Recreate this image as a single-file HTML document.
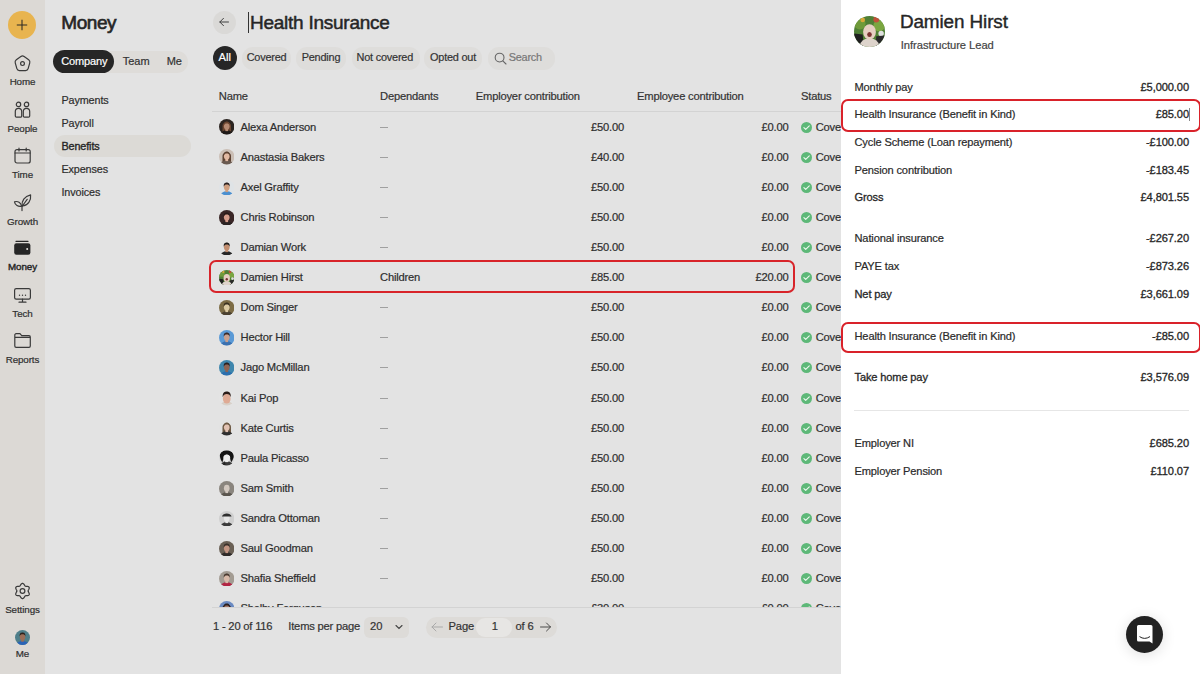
<!DOCTYPE html>
<html><head><meta charset="utf-8"><style>
html,body{margin:0;padding:0;width:1200px;height:674px;overflow:hidden;position:relative;font-family:"Liberation Sans", sans-serif;}
.t{position:absolute;line-height:1;white-space:nowrap;-webkit-text-stroke:0.2px currentColor;}
</style></head><body>
<div style="position:absolute;left:0px;top:0px;width:45px;height:674px;background:#dcd9d5;"></div>
<div style="position:absolute;left:45px;top:0px;width:796px;height:674px;background:#e3e3e3;"></div>
<div style="position:absolute;left:841px;top:0px;width:359px;height:674px;background:#ffffff;"></div>
<div style="position:absolute;left:8px;top:11px;width:28px;height:28px;background:#e8b44f;border-radius:50%;"></div>
<svg style="position:absolute;left:14px;top:17px" width="16" height="16" viewBox="0 0 16 16"><path d="M8 2.8V13.2M2.8 8H13.2" stroke="#2d2a25" stroke-width="1.05" fill="none"/></svg>
<svg style="position:absolute;left:13px;top:54px" width="19" height="18" viewBox="0 0 19 18"><path d="M11.11 2.48 L15.69 5.82 Q17.30 7.00 16.76 8.93 L15.14 14.67 Q14.60 16.60 12.60 16.60 L6.40 16.60 Q4.40 16.60 3.86 14.67 L2.24 8.93 Q1.70 7.00 3.31 5.82 L7.89 2.48 Q9.50 1.30 11.11 2.48 Z" stroke="#3a3a3a" stroke-width="1.2" fill="none" stroke-linejoin="round" stroke-linecap="round"/><circle cx="9.5" cy="9.6" r="1.9" stroke="#3a3a3a" stroke-width="1.2" fill="none" stroke-linejoin="round" stroke-linecap="round"/></svg>
<svg style="position:absolute;left:13px;top:101px" width="19" height="18" viewBox="0 0 19 18"><circle cx="5.5" cy="3.4" r="2.2" stroke="#3a3a3a" stroke-width="1.2" fill="none" stroke-linejoin="round" stroke-linecap="round"/><circle cx="13.5" cy="3.4" r="2.2" stroke="#3a3a3a" stroke-width="1.2" fill="none" stroke-linejoin="round" stroke-linecap="round"/><path d="M2.3 15 V10.6 a3.2 3.2 0 0 1 6.4 0 V15 a1.2 1.2 0 0 1 -1.2 1.2 H3.5 a1.2 1.2 0 0 1 -1.2 -1.2 Z" stroke="#3a3a3a" stroke-width="1.2" fill="none" stroke-linejoin="round" stroke-linecap="round"/><path d="M10.3 15 V10.6 a3.2 3.2 0 0 1 6.4 0 V15 a1.2 1.2 0 0 1 -1.2 1.2 H11.5 a1.2 1.2 0 0 1 -1.2 -1.2 Z" stroke="#3a3a3a" stroke-width="1.2" fill="none" stroke-linejoin="round" stroke-linecap="round"/></svg>
<svg style="position:absolute;left:13px;top:147px" width="19" height="18" viewBox="0 0 19 18"><rect x="2" y="2.6" width="15.2" height="13.4" rx="2" stroke="#3a3a3a" stroke-width="1.2" fill="none" stroke-linejoin="round" stroke-linecap="round"/><path d="M2 6 H17.2 M6 1.2 V4 M13.2 1.2 V4" stroke="#3a3a3a" stroke-width="1.2" fill="none" stroke-linejoin="round" stroke-linecap="round"/></svg>
<svg style="position:absolute;left:13px;top:193px" width="19" height="19" viewBox="0 0 19 19"><path d="M9.3 13 C8.2 8 11.5 3.2 17.6 1.8 C18.3 7.5 15 12.4 9.3 13 Z" stroke="#3a3a3a" stroke-width="1.2" fill="none" stroke-linejoin="round" stroke-linecap="round"/><path d="M9.3 13 L14.2 6.3" stroke="#3a3a3a" stroke-width="1.2" fill="none" stroke-linejoin="round" stroke-linecap="round"/><path d="M8.6 13.2 C5.2 14 2 12 1.5 8.8 C4.8 7.8 8 9.5 8.6 13.2 Z" stroke="#3a3a3a" stroke-width="1.2" fill="none" stroke-linejoin="round" stroke-linecap="round"/><path d="M9 13 V17.6" stroke="#3a3a3a" stroke-width="1.2" fill="none" stroke-linejoin="round" stroke-linecap="round"/></svg>
<svg style="position:absolute;left:13px;top:240px" width="19" height="16" viewBox="0 0 19 16"><rect x="1.2" y="3.2" width="16.2" height="11.6" rx="2.2" fill="#262626"/><path d="M3 1.3 H15" stroke="#262626" stroke-width="1.3" stroke-linecap="round"/><circle cx="14.2" cy="9" r="1" fill="#e6e3df"/></svg>
<svg style="position:absolute;left:13px;top:287px" width="19" height="17" viewBox="0 0 19 17"><rect x="1.6" y="1.6" width="15.8" height="10.6" rx="1.6" stroke="#3a3a3a" stroke-width="1.2" fill="none" stroke-linejoin="round" stroke-linecap="round"/><path d="M9.5 12.2 V15 M6 15.2 H13" stroke="#3a3a3a" stroke-width="1.2" fill="none" stroke-linejoin="round" stroke-linecap="round"/><circle cx="6.5" cy="8.3" r="0.7" fill="#3a3a3a"/><circle cx="9.5" cy="8.3" r="0.7" fill="#3a3a3a"/><circle cx="12.5" cy="8.3" r="0.7" fill="#3a3a3a"/></svg>
<svg style="position:absolute;left:13px;top:332px" width="19" height="17" viewBox="0 0 19 17"><path d="M1.8 3 a1.3 1.3 0 0 1 1.3 -1.3 H7 L8.7 3.6 H16 a1.3 1.3 0 0 1 1.3 1.3 V14 a1.3 1.3 0 0 1 -1.3 1.3 H3.1 a1.3 1.3 0 0 1 -1.3 -1.3 Z M1.8 5.3 H17.3" stroke="#3a3a3a" stroke-width="1.2" fill="none" stroke-linejoin="round" stroke-linecap="round"/></svg>
<svg style="position:absolute;left:13px;top:582px" width="19" height="18" viewBox="0 0 19 18"><path d="M9.50 1.40 L9.90 1.46 L10.27 1.63 L10.62 1.90 L10.94 2.24 L11.21 2.62 L11.44 3.02 L11.65 3.39 L11.86 3.71 L12.06 3.97 L12.30 4.15 L12.58 4.26 L12.90 4.31 L13.28 4.33 L13.71 4.32 L14.17 4.33 L14.63 4.38 L15.09 4.48 L15.49 4.65 L15.83 4.89 L16.08 5.20 L16.23 5.57 L16.27 5.99 L16.21 6.42 L16.07 6.86 L15.88 7.29 L15.65 7.69 L15.44 8.06 L15.26 8.39 L15.14 8.70 L15.10 9.00 L15.14 9.30 L15.26 9.61 L15.44 9.94 L15.65 10.31 L15.88 10.71 L16.07 11.14 L16.21 11.58 L16.27 12.01 L16.23 12.43 L16.08 12.80 L15.83 13.11 L15.49 13.35 L15.09 13.52 L14.63 13.62 L14.17 13.67 L13.71 13.68 L13.28 13.67 L12.90 13.69 L12.58 13.74 L12.30 13.85 L12.06 14.03 L11.86 14.29 L11.65 14.61 L11.44 14.98 L11.21 15.38 L10.94 15.76 L10.62 16.10 L10.27 16.37 L9.90 16.54 L9.50 16.60 L9.10 16.54 L8.73 16.37 L8.38 16.10 L8.06 15.76 L7.79 15.38 L7.56 14.98 L7.35 14.61 L7.14 14.29 L6.94 14.03 L6.70 13.85 L6.42 13.74 L6.10 13.69 L5.72 13.67 L5.29 13.68 L4.83 13.67 L4.37 13.62 L3.91 13.52 L3.51 13.35 L3.17 13.11 L2.92 12.80 L2.77 12.43 L2.73 12.01 L2.79 11.58 L2.93 11.14 L3.12 10.71 L3.35 10.31 L3.56 9.94 L3.74 9.61 L3.86 9.30 L3.90 9.00 L3.86 8.70 L3.74 8.39 L3.56 8.06 L3.35 7.69 L3.12 7.29 L2.93 6.86 L2.79 6.42 L2.73 5.99 L2.77 5.57 L2.92 5.20 L3.17 4.89 L3.51 4.65 L3.91 4.48 L4.37 4.38 L4.83 4.33 L5.29 4.32 L5.72 4.33 L6.10 4.31 L6.42 4.26 L6.70 4.15 L6.94 3.97 L7.14 3.71 L7.35 3.39 L7.56 3.02 L7.79 2.62 L8.06 2.24 L8.38 1.90 L8.73 1.63 L9.10 1.46 L9.50 1.40 Z" stroke="#3a3a3a" stroke-width="1.2" fill="none" stroke-linejoin="round" stroke-linecap="round"/><circle cx="9.5" cy="9" r="2.4" stroke="#3a3a3a" stroke-width="1.2" fill="none" stroke-linejoin="round" stroke-linecap="round"/></svg>
<div style="position:absolute;left:15px;top:630.2px;width:15px;height:15px"><svg width="15" height="15" viewBox="0 0 16 16" style="display:block"><defs><clipPath id="c1"><circle cx="8" cy="8" r="8"/></clipPath></defs><g clip-path="url(#c1)"><rect width="16" height="16" fill="#4f7f8a"/><ellipse cx="8" cy="16.5" rx="6.8" ry="4.8" fill="#2a64b8"/><rect x="6.6" y="9.5" width="2.8" height="3" fill="#9a6e58"/><ellipse cx="8" cy="7.4" rx="2.9" ry="3.5" fill="#9a6e58"/><path d="M4.9 7 C4.6 3.2 6.5 2.6 8 2.6 C9.5 2.6 11.4 3.2 11.1 7 C10.5 5 9.5 4.6 8 4.6 C6.5 4.6 5.5 5 4.9 7 Z" fill="#2e221c"/></g></svg></div>
<div class="t" style="left:0;width:45px;text-align:center;top:77.40px;font-size:9.8px;letter-spacing:-0.1px;color:#2f2f2f;">Home</div>
<div class="t" style="left:0;width:45px;text-align:center;top:123.70px;font-size:9.8px;letter-spacing:-0.1px;color:#2f2f2f;">People</div>
<div class="t" style="left:0;width:45px;text-align:center;top:170.40px;font-size:9.8px;letter-spacing:-0.1px;color:#2f2f2f;">Time</div>
<div class="t" style="left:0;width:45px;text-align:center;top:216.90px;font-size:9.8px;letter-spacing:-0.1px;color:#2f2f2f;">Growth</div>
<div class="t" style="left:0;width:45px;text-align:center;top:262.20px;font-size:9.8px;letter-spacing:-0.1px;color:#262626;-webkit-text-stroke:0.4px #262626">Money</div>
<div class="t" style="left:0;width:45px;text-align:center;top:308.80px;font-size:9.8px;letter-spacing:-0.1px;color:#2f2f2f;">Tech</div>
<div class="t" style="left:0;width:45px;text-align:center;top:354.50px;font-size:9.8px;letter-spacing:-0.1px;color:#2f2f2f;">Reports</div>
<div class="t" style="left:0;width:45px;text-align:center;top:604.70px;font-size:9.8px;letter-spacing:-0.1px;color:#2f2f2f;">Settings</div>
<div class="t" style="left:0;width:45px;text-align:center;top:648.80px;font-size:9.8px;letter-spacing:-0.1px;color:#2f2f2f;">Me</div>
<div class="t " style="left:61.30px;top:12.62px;font-size:19px;color:#262626;font-weight:normal;letter-spacing:-0.45px;-webkit-text-stroke:0.65px #262626;">Money</div>
<div style="position:absolute;left:53px;top:50.5px;width:135px;height:22px;background:#dedcd9;border-radius:11px;"></div>
<div style="position:absolute;left:53px;top:49.6px;width:61px;height:23.7px;background:#262626;border-radius:12px;"></div>
<div class="t " style="left:61.30px;top:55.99px;font-size:11px;color:#ffffff;font-weight:normal;letter-spacing:-0.15px;">Company</div>
<div class="t " style="left:122.70px;top:55.99px;font-size:11px;color:#333;font-weight:normal;">Team</div>
<div class="t " style="left:166.70px;top:55.99px;font-size:11px;color:#333;font-weight:normal;">Me</div>
<div style="position:absolute;left:54px;top:135.4px;width:137px;height:21.6px;background:#dcdad6;border-radius:11px;"></div>
<div class="t " style="left:61.40px;top:94.56px;font-size:10.8px;color:#2e2e2e;font-weight:normal;letter-spacing:-0.1px;">Payments</div>
<div class="t " style="left:61.40px;top:117.66px;font-size:10.8px;color:#2e2e2e;font-weight:normal;letter-spacing:-0.1px;">Payroll</div>
<div class="t " style="left:61.40px;top:140.86px;font-size:10.8px;color:#262626;font-weight:normal;letter-spacing:-0.1px;-webkit-text-stroke:0.35px #262626;">Benefits</div>
<div class="t " style="left:61.40px;top:163.96px;font-size:10.8px;color:#2e2e2e;font-weight:normal;letter-spacing:-0.1px;">Expenses</div>
<div class="t " style="left:61.40px;top:187.06px;font-size:10.8px;color:#2e2e2e;font-weight:normal;letter-spacing:-0.1px;">Invoices</div>
<div style="position:absolute;left:212.5px;top:10.5px;width:23px;height:23px;background:#dad9d7;border-radius:50%;"></div>
<svg style="position:absolute;left:217px;top:15px" width="14" height="14" viewBox="0 0 14 14"><path d="M11.5 7 H2.8 M6.5 3.3 L2.8 7 L6.5 10.7" stroke="#3a3a3a" stroke-width="0.95" fill="none" stroke-linecap="round" stroke-linejoin="round"/></svg>
<div style="position:absolute;left:248px;top:12px;width:1px;height:21px;background:#333;"></div>
<div class="t " style="left:250.00px;top:12.62px;font-size:19px;color:#262626;font-weight:normal;-webkit-text-stroke:0.5px #262626;letter-spacing:-0.25px;">Health Insurance</div>
<div style="position:absolute;left:212.5px;top:46px;width:24.5px;height:23.5px;background:#262626;border-radius:12px;"></div>
<div class="t " style="left:224.75px;top:52.42px;font-size:11.2px;color:#fff;font-weight:normal;transform:translateX(-50%);">All</div>
<div style="position:absolute;left:241.7px;top:47px;width:49.1px;height:22.5px;background:#dedddb;border-radius:11px;"></div>
<div class="t " style="left:246.70px;top:52.47px;font-size:10.9px;color:#333;font-weight:normal;letter-spacing:-0.2px;">Covered</div>
<div style="position:absolute;left:295.8px;top:47px;width:50.0px;height:22.5px;background:#dedddb;border-radius:11px;"></div>
<div class="t " style="left:301.70px;top:52.47px;font-size:10.9px;color:#333;font-weight:normal;letter-spacing:-0.2px;">Pending</div>
<div style="position:absolute;left:352px;top:47px;width:67.8px;height:22.5px;background:#dedddb;border-radius:11px;"></div>
<div class="t " style="left:356.50px;top:52.47px;font-size:10.9px;color:#333;font-weight:normal;letter-spacing:-0.2px;">Not covered</div>
<div style="position:absolute;left:424.4px;top:47px;width:57.6px;height:22.5px;background:#dedddb;border-radius:11px;"></div>
<div class="t " style="left:430.00px;top:52.47px;font-size:10.9px;color:#333;font-weight:normal;letter-spacing:-0.2px;">Opted out</div>
<div style="position:absolute;left:487.7px;top:47px;width:67px;height:22.5px;background:#dedddb;border-radius:11px;"></div>
<svg style="position:absolute;left:494px;top:52px" width="13" height="13" viewBox="0 0 13 13"><circle cx="5.6" cy="5.6" r="4.4" stroke="#666" stroke-width="1.1" fill="none"/><path d="M8.8 8.8 L12 12" stroke="#666" stroke-width="1.1" stroke-linecap="round"/></svg>
<div class="t " style="left:508.80px;top:52.47px;font-size:10.9px;color:#777;font-weight:normal;letter-spacing:-0.25px;">Search</div>
<div class="t " style="left:218.75px;top:90.52px;font-size:11.2px;color:#333;font-weight:normal;letter-spacing:-0.2px;">Name</div>
<div class="t " style="left:380.00px;top:90.52px;font-size:11.2px;color:#333;font-weight:normal;letter-spacing:-0.2px;">Dependants</div>
<div class="t " style="left:475.75px;top:90.52px;font-size:11.2px;color:#333;font-weight:normal;letter-spacing:-0.2px;">Employer contribution</div>
<div class="t " style="left:637.00px;top:90.52px;font-size:11.2px;color:#333;font-weight:normal;letter-spacing:-0.2px;">Employee contribution</div>
<div class="t " style="left:801.00px;top:90.52px;font-size:11.2px;color:#333;font-weight:normal;letter-spacing:-0.2px;">Status</div>
<div style="position:absolute;left:212px;top:110.5px;width:629px;height:1px;background:#d3d3d3;"></div>
<div style="position:absolute;left:205px;top:111px;width:636px;height:496px;overflow:hidden">
<div style="position:absolute;left:13.75px;top:8.35px;width:15.5px;height:15.5px;"><svg width="15.5" height="15.5" viewBox="0 0 16 16" style="display:block"><defs><clipPath id="c2"><circle cx="8" cy="8" r="8"/></clipPath></defs><g clip-path="url(#c2)"><rect width="16" height="16" fill="#2b2420"/><path d="M3.6 7 C3.6 2.5 12.4 2.5 12.4 7 V14 H3.6 Z" fill="#6a4530"/><ellipse cx="8" cy="16.5" rx="6.8" ry="4.8" fill="#1f1a18"/><rect x="6.6" y="9.5" width="2.8" height="3" fill="#b58a72"/><ellipse cx="8" cy="7.4" rx="2.9" ry="3.5" fill="#b58a72"/><path d="M4.9 7 C4.6 3.2 6.5 2.6 8 2.6 C9.5 2.6 11.4 3.2 11.1 7 C10.5 5 9.5 4.6 8 4.6 C6.5 4.6 5.5 5 4.9 7 Z" fill="#6a4530"/></g></svg></div>
<div class="t" style="left:35.50px;top:10.62px;font-size:11.2px;color:#2e2e2e;letter-spacing:-0.2px;">Alexa Anderson</div>
<div style="position:absolute;left:175px;top:15.60px;width:7.5px;height:1px;background:#a0a0a0;"></div>
<div class="t" style="right:217.00px;top:10.62px;font-size:11.2px;color:#2e2e2e;letter-spacing:-0.2px;">£50.00</div>
<div class="t" style="right:52.50px;top:10.62px;font-size:11.2px;color:#2e2e2e;letter-spacing:-0.2px;">£0.00</div>
<div style="position:absolute;left:596px;top:10.60px;width:11px;height:11px;border-radius:50%;background:#5db878;"></div>
<svg style="position:absolute;left:596px;top:10.60px" width="11" height="11" viewBox="0 0 11 11"><path d="M2.9 5.6 L4.7 7.4 L8.3 3.8" stroke="#eef8f0" stroke-width="1.1" fill="none" stroke-linecap="round" stroke-linejoin="round"/></svg>
<div class="t" style="left:610.70px;top:10.62px;font-size:11.2px;color:#2e2e2e;letter-spacing:-0.2px;">Covered</div>
<div style="position:absolute;left:13.75px;top:38.45px;width:15.5px;height:15.5px;"><svg width="15.5" height="15.5" viewBox="0 0 16 16" style="display:block"><defs><clipPath id="c3"><circle cx="8" cy="8" r="8"/></clipPath></defs><g clip-path="url(#c3)"><rect width="16" height="16" fill="#cbbfb6"/><path d="M3.6 7 C3.6 2.5 12.4 2.5 12.4 7 V14 H3.6 Z" fill="#5e4232"/><ellipse cx="8" cy="16.5" rx="6.8" ry="4.8" fill="#6a5a50"/><rect x="6.6" y="9.5" width="2.8" height="3" fill="#e2b9a2"/><ellipse cx="8" cy="7.4" rx="2.9" ry="3.5" fill="#e2b9a2"/><path d="M4.9 7 C4.6 3.2 6.5 2.6 8 2.6 C9.5 2.6 11.4 3.2 11.1 7 C10.5 5 9.5 4.6 8 4.6 C6.5 4.6 5.5 5 4.9 7 Z" fill="#5e4232"/></g></svg></div>
<div class="t" style="left:35.50px;top:40.72px;font-size:11.2px;color:#2e2e2e;letter-spacing:-0.2px;">Anastasia Bakers</div>
<div style="position:absolute;left:175px;top:45.70px;width:7.5px;height:1px;background:#a0a0a0;"></div>
<div class="t" style="right:217.00px;top:40.72px;font-size:11.2px;color:#2e2e2e;letter-spacing:-0.2px;">£40.00</div>
<div class="t" style="right:52.50px;top:40.72px;font-size:11.2px;color:#2e2e2e;letter-spacing:-0.2px;">£0.00</div>
<div style="position:absolute;left:596px;top:40.70px;width:11px;height:11px;border-radius:50%;background:#5db878;"></div>
<svg style="position:absolute;left:596px;top:40.70px" width="11" height="11" viewBox="0 0 11 11"><path d="M2.9 5.6 L4.7 7.4 L8.3 3.8" stroke="#eef8f0" stroke-width="1.1" fill="none" stroke-linecap="round" stroke-linejoin="round"/></svg>
<div class="t" style="left:610.70px;top:40.72px;font-size:11.2px;color:#2e2e2e;letter-spacing:-0.2px;">Covered</div>
<div style="position:absolute;left:13.75px;top:68.55px;width:15.5px;height:15.5px;"><svg width="15.5" height="15.5" viewBox="0 0 16 16" style="display:block"><defs><clipPath id="c4"><circle cx="8" cy="8" r="8"/></clipPath></defs><g clip-path="url(#c4)"><rect width="16" height="16" fill="#dfe3e6"/><ellipse cx="8" cy="16.5" rx="6.8" ry="4.8" fill="#4a8fd0"/><rect x="6.6" y="9.5" width="2.8" height="3" fill="#cf9f80"/><ellipse cx="8" cy="7.4" rx="2.9" ry="3.5" fill="#cf9f80"/><path d="M4.9 7 C4.6 3.2 6.5 2.6 8 2.6 C9.5 2.6 11.4 3.2 11.1 7 C10.5 5 9.5 4.6 8 4.6 C6.5 4.6 5.5 5 4.9 7 Z" fill="#2a2020"/></g></svg></div>
<div class="t" style="left:35.50px;top:70.82px;font-size:11.2px;color:#2e2e2e;letter-spacing:-0.2px;">Axel Graffity</div>
<div style="position:absolute;left:175px;top:75.80px;width:7.5px;height:1px;background:#a0a0a0;"></div>
<div class="t" style="right:217.00px;top:70.82px;font-size:11.2px;color:#2e2e2e;letter-spacing:-0.2px;">£50.00</div>
<div class="t" style="right:52.50px;top:70.82px;font-size:11.2px;color:#2e2e2e;letter-spacing:-0.2px;">£0.00</div>
<div style="position:absolute;left:596px;top:70.80px;width:11px;height:11px;border-radius:50%;background:#5db878;"></div>
<svg style="position:absolute;left:596px;top:70.80px" width="11" height="11" viewBox="0 0 11 11"><path d="M2.9 5.6 L4.7 7.4 L8.3 3.8" stroke="#eef8f0" stroke-width="1.1" fill="none" stroke-linecap="round" stroke-linejoin="round"/></svg>
<div class="t" style="left:610.70px;top:70.82px;font-size:11.2px;color:#2e2e2e;letter-spacing:-0.2px;">Covered</div>
<div style="position:absolute;left:13.75px;top:98.65px;width:15.5px;height:15.5px;"><svg width="15.5" height="15.5" viewBox="0 0 16 16" style="display:block"><defs><clipPath id="c5"><circle cx="8" cy="8" r="8"/></clipPath></defs><g clip-path="url(#c5)"><rect width="16" height="16" fill="#3a2626"/><ellipse cx="8" cy="16.5" rx="6.8" ry="4.8" fill="#2a2222"/><rect x="6.6" y="9.5" width="2.8" height="3" fill="#d69c8a"/><ellipse cx="8" cy="7.4" rx="2.9" ry="3.5" fill="#d69c8a"/><path d="M4.9 7 C4.6 3.2 6.5 2.6 8 2.6 C9.5 2.6 11.4 3.2 11.1 7 C10.5 5 9.5 4.6 8 4.6 C6.5 4.6 5.5 5 4.9 7 Z" fill="#2a1a18"/></g></svg></div>
<div class="t" style="left:35.50px;top:100.92px;font-size:11.2px;color:#2e2e2e;letter-spacing:-0.2px;">Chris Robinson</div>
<div style="position:absolute;left:175px;top:105.90px;width:7.5px;height:1px;background:#a0a0a0;"></div>
<div class="t" style="right:217.00px;top:100.92px;font-size:11.2px;color:#2e2e2e;letter-spacing:-0.2px;">£50.00</div>
<div class="t" style="right:52.50px;top:100.92px;font-size:11.2px;color:#2e2e2e;letter-spacing:-0.2px;">£0.00</div>
<div style="position:absolute;left:596px;top:100.90px;width:11px;height:11px;border-radius:50%;background:#5db878;"></div>
<svg style="position:absolute;left:596px;top:100.90px" width="11" height="11" viewBox="0 0 11 11"><path d="M2.9 5.6 L4.7 7.4 L8.3 3.8" stroke="#eef8f0" stroke-width="1.1" fill="none" stroke-linecap="round" stroke-linejoin="round"/></svg>
<div class="t" style="left:610.70px;top:100.92px;font-size:11.2px;color:#2e2e2e;letter-spacing:-0.2px;">Covered</div>
<div style="position:absolute;left:13.75px;top:128.75px;width:15.5px;height:15.5px;"><svg width="15.5" height="15.5" viewBox="0 0 16 16" style="display:block"><defs><clipPath id="c6"><circle cx="8" cy="8" r="8"/></clipPath></defs><g clip-path="url(#c6)"><rect width="16" height="16" fill="#e3e3e3"/><ellipse cx="8" cy="16.5" rx="6.8" ry="4.8" fill="#262626"/><rect x="6.6" y="9.5" width="2.8" height="3" fill="#c28e70"/><ellipse cx="8" cy="7.4" rx="2.9" ry="3.5" fill="#c28e70"/><path d="M4.9 7 C4.6 3.2 6.5 2.6 8 2.6 C9.5 2.6 11.4 3.2 11.1 7 C10.5 5 9.5 4.6 8 4.6 C6.5 4.6 5.5 5 4.9 7 Z" fill="#1e1a18"/></g></svg></div>
<div class="t" style="left:35.50px;top:131.02px;font-size:11.2px;color:#2e2e2e;letter-spacing:-0.2px;">Damian Work</div>
<div style="position:absolute;left:175px;top:136.00px;width:7.5px;height:1px;background:#a0a0a0;"></div>
<div class="t" style="right:217.00px;top:131.02px;font-size:11.2px;color:#2e2e2e;letter-spacing:-0.2px;">£50.00</div>
<div class="t" style="right:52.50px;top:131.02px;font-size:11.2px;color:#2e2e2e;letter-spacing:-0.2px;">£0.00</div>
<div style="position:absolute;left:596px;top:131.00px;width:11px;height:11px;border-radius:50%;background:#5db878;"></div>
<svg style="position:absolute;left:596px;top:131.00px" width="11" height="11" viewBox="0 0 11 11"><path d="M2.9 5.6 L4.7 7.4 L8.3 3.8" stroke="#eef8f0" stroke-width="1.1" fill="none" stroke-linecap="round" stroke-linejoin="round"/></svg>
<div class="t" style="left:610.70px;top:131.02px;font-size:11.2px;color:#2e2e2e;letter-spacing:-0.2px;">Covered</div>
<div style="position:absolute;left:13.75px;top:158.85px;width:15.5px;height:15.5px;"><svg width="15.5" height="15.5" viewBox="0 0 16 16" style="display:block"><defs><clipPath id="cdh"><circle cx="8" cy="8" r="8"/></clipPath></defs><g clip-path="url(#cdh)"><rect width="16" height="16" fill="#4f7f35"/><circle cx="3" cy="4" r="3" fill="#6f9a3a"/><circle cx="13" cy="5" r="3" fill="#7aa640"/><circle cx="11.5" cy="1.8" r="1.5" fill="#c0503a"/><circle cx="4.5" cy="2" r="1.2" fill="#d8a83a"/><circle cx="14" cy="9" r="1.4" fill="#e0e0e0"/><path d="M0 9 L4.5 9.5 L5 16 H0 Z" fill="#1f1f1f"/><path d="M16 10 L11.5 10.5 L11 16 H16 Z" fill="#2a2a2a"/><ellipse cx="8" cy="15.5" rx="5" ry="4" fill="#ddd3cb"/><ellipse cx="8" cy="8.2" rx="3.3" ry="4" fill="#e6cfc2"/><ellipse cx="8" cy="9.6" rx="1.2" ry="1.3" fill="#7a3434"/></g></svg></div>
<div class="t" style="left:35.50px;top:161.12px;font-size:11.2px;color:#2e2e2e;letter-spacing:-0.2px;">Damien Hirst</div>
<div class="t" style="left:175.00px;top:161.12px;font-size:11.2px;color:#2e2e2e;letter-spacing:-0.2px;">Children</div>
<div class="t" style="right:217.00px;top:161.12px;font-size:11.2px;color:#2e2e2e;letter-spacing:-0.2px;">£85.00</div>
<div class="t" style="right:52.50px;top:161.12px;font-size:11.2px;color:#2e2e2e;letter-spacing:-0.2px;">£20.00</div>
<div style="position:absolute;left:596px;top:161.10px;width:11px;height:11px;border-radius:50%;background:#5db878;"></div>
<svg style="position:absolute;left:596px;top:161.10px" width="11" height="11" viewBox="0 0 11 11"><path d="M2.9 5.6 L4.7 7.4 L8.3 3.8" stroke="#eef8f0" stroke-width="1.1" fill="none" stroke-linecap="round" stroke-linejoin="round"/></svg>
<div class="t" style="left:610.70px;top:161.12px;font-size:11.2px;color:#2e2e2e;letter-spacing:-0.2px;">Covered</div>
<div style="position:absolute;left:13.75px;top:188.95px;width:15.5px;height:15.5px;"><svg width="15.5" height="15.5" viewBox="0 0 16 16" style="display:block"><defs><clipPath id="c7"><circle cx="8" cy="8" r="8"/></clipPath></defs><g clip-path="url(#c7)"><rect width="16" height="16" fill="#7d6c45"/><ellipse cx="8" cy="16.5" rx="6.8" ry="4.8" fill="#4a4030"/><rect x="6.6" y="9.5" width="2.8" height="3" fill="#dccaa2"/><ellipse cx="8" cy="7.4" rx="2.9" ry="3.5" fill="#dccaa2"/><path d="M4.9 7 C4.6 3.2 6.5 2.6 8 2.6 C9.5 2.6 11.4 3.2 11.1 7 C10.5 5 9.5 4.6 8 4.6 C6.5 4.6 5.5 5 4.9 7 Z" fill="#3a3020"/></g></svg></div>
<div class="t" style="left:35.50px;top:191.22px;font-size:11.2px;color:#2e2e2e;letter-spacing:-0.2px;">Dom Singer</div>
<div style="position:absolute;left:175px;top:196.20px;width:7.5px;height:1px;background:#a0a0a0;"></div>
<div class="t" style="right:217.00px;top:191.22px;font-size:11.2px;color:#2e2e2e;letter-spacing:-0.2px;">£50.00</div>
<div class="t" style="right:52.50px;top:191.22px;font-size:11.2px;color:#2e2e2e;letter-spacing:-0.2px;">£0.00</div>
<div style="position:absolute;left:596px;top:191.20px;width:11px;height:11px;border-radius:50%;background:#5db878;"></div>
<svg style="position:absolute;left:596px;top:191.20px" width="11" height="11" viewBox="0 0 11 11"><path d="M2.9 5.6 L4.7 7.4 L8.3 3.8" stroke="#eef8f0" stroke-width="1.1" fill="none" stroke-linecap="round" stroke-linejoin="round"/></svg>
<div class="t" style="left:610.70px;top:191.22px;font-size:11.2px;color:#2e2e2e;letter-spacing:-0.2px;">Covered</div>
<div style="position:absolute;left:13.75px;top:219.05px;width:15.5px;height:15.5px;"><svg width="15.5" height="15.5" viewBox="0 0 16 16" style="display:block"><defs><clipPath id="c8"><circle cx="8" cy="8" r="8"/></clipPath></defs><g clip-path="url(#c8)"><rect width="16" height="16" fill="#5b9ad6"/><ellipse cx="8" cy="16.5" rx="6.8" ry="4.8" fill="#3a70b0"/><rect x="6.6" y="9.5" width="2.8" height="3" fill="#c9a08e"/><ellipse cx="8" cy="7.4" rx="2.9" ry="3.5" fill="#c9a08e"/><path d="M4.9 7 C4.6 3.2 6.5 2.6 8 2.6 C9.5 2.6 11.4 3.2 11.1 7 C10.5 5 9.5 4.6 8 4.6 C6.5 4.6 5.5 5 4.9 7 Z" fill="#3a2a2a"/></g></svg></div>
<div class="t" style="left:35.50px;top:221.32px;font-size:11.2px;color:#2e2e2e;letter-spacing:-0.2px;">Hector Hill</div>
<div style="position:absolute;left:175px;top:226.30px;width:7.5px;height:1px;background:#a0a0a0;"></div>
<div class="t" style="right:217.00px;top:221.32px;font-size:11.2px;color:#2e2e2e;letter-spacing:-0.2px;">£50.00</div>
<div class="t" style="right:52.50px;top:221.32px;font-size:11.2px;color:#2e2e2e;letter-spacing:-0.2px;">£0.00</div>
<div style="position:absolute;left:596px;top:221.30px;width:11px;height:11px;border-radius:50%;background:#5db878;"></div>
<svg style="position:absolute;left:596px;top:221.30px" width="11" height="11" viewBox="0 0 11 11"><path d="M2.9 5.6 L4.7 7.4 L8.3 3.8" stroke="#eef8f0" stroke-width="1.1" fill="none" stroke-linecap="round" stroke-linejoin="round"/></svg>
<div class="t" style="left:610.70px;top:221.32px;font-size:11.2px;color:#2e2e2e;letter-spacing:-0.2px;">Covered</div>
<div style="position:absolute;left:13.75px;top:249.15px;width:15.5px;height:15.5px;"><svg width="15.5" height="15.5" viewBox="0 0 16 16" style="display:block"><defs><clipPath id="c9"><circle cx="8" cy="8" r="8"/></clipPath></defs><g clip-path="url(#c9)"><rect width="16" height="16" fill="#3f86ad"/><ellipse cx="8" cy="16.5" rx="6.8" ry="4.8" fill="#2a6eae"/><rect x="6.6" y="9.5" width="2.8" height="3" fill="#8e6352"/><ellipse cx="8" cy="7.4" rx="2.9" ry="3.5" fill="#8e6352"/><path d="M4.9 7 C4.6 3.2 6.5 2.6 8 2.6 C9.5 2.6 11.4 3.2 11.1 7 C10.5 5 9.5 4.6 8 4.6 C6.5 4.6 5.5 5 4.9 7 Z" fill="#2a2020"/></g></svg></div>
<div class="t" style="left:35.50px;top:251.42px;font-size:11.2px;color:#2e2e2e;letter-spacing:-0.2px;">Jago McMillan</div>
<div style="position:absolute;left:175px;top:256.40px;width:7.5px;height:1px;background:#a0a0a0;"></div>
<div class="t" style="right:217.00px;top:251.42px;font-size:11.2px;color:#2e2e2e;letter-spacing:-0.2px;">£50.00</div>
<div class="t" style="right:52.50px;top:251.42px;font-size:11.2px;color:#2e2e2e;letter-spacing:-0.2px;">£0.00</div>
<div style="position:absolute;left:596px;top:251.40px;width:11px;height:11px;border-radius:50%;background:#5db878;"></div>
<svg style="position:absolute;left:596px;top:251.40px" width="11" height="11" viewBox="0 0 11 11"><path d="M2.9 5.6 L4.7 7.4 L8.3 3.8" stroke="#eef8f0" stroke-width="1.1" fill="none" stroke-linecap="round" stroke-linejoin="round"/></svg>
<div class="t" style="left:610.70px;top:251.42px;font-size:11.2px;color:#2e2e2e;letter-spacing:-0.2px;">Covered</div>
<div style="position:absolute;left:13.75px;top:279.25px;width:15.5px;height:15.5px;"><svg width="15.5" height="15.5" viewBox="0 0 16 16" style="display:block"><defs><clipPath id="c10"><circle cx="8" cy="8" r="8"/></clipPath></defs><g clip-path="url(#c10)"><rect width="16" height="16" fill="#e4e4e4"/><ellipse cx="8" cy="16.5" rx="6.8" ry="4.8" fill="#d8d0c8"/><rect x="6.6" y="9.5" width="2.8" height="3" fill="#e0ae98"/><ellipse cx="8" cy="7.4" rx="2.9" ry="3.5" fill="#e0ae98"/><ellipse cx="8" cy="9" rx="4" ry="5" fill="#dfaa94"/><path d="M3.8 7.5 C3.5 2.5 6 1.5 8 1.5 C10 1.5 12.5 2.5 12.2 7.5 C11.5 5 10 4.2 8 4.2 C6 4.2 4.5 5 3.8 7.5 Z" fill="#2a1c18"/></g></svg></div>
<div class="t" style="left:35.50px;top:281.52px;font-size:11.2px;color:#2e2e2e;letter-spacing:-0.2px;">Kai Pop</div>
<div style="position:absolute;left:175px;top:286.50px;width:7.5px;height:1px;background:#a0a0a0;"></div>
<div class="t" style="right:217.00px;top:281.52px;font-size:11.2px;color:#2e2e2e;letter-spacing:-0.2px;">£50.00</div>
<div class="t" style="right:52.50px;top:281.52px;font-size:11.2px;color:#2e2e2e;letter-spacing:-0.2px;">£0.00</div>
<div style="position:absolute;left:596px;top:281.50px;width:11px;height:11px;border-radius:50%;background:#5db878;"></div>
<svg style="position:absolute;left:596px;top:281.50px" width="11" height="11" viewBox="0 0 11 11"><path d="M2.9 5.6 L4.7 7.4 L8.3 3.8" stroke="#eef8f0" stroke-width="1.1" fill="none" stroke-linecap="round" stroke-linejoin="round"/></svg>
<div class="t" style="left:610.70px;top:281.52px;font-size:11.2px;color:#2e2e2e;letter-spacing:-0.2px;">Covered</div>
<div style="position:absolute;left:13.75px;top:309.35px;width:15.5px;height:15.5px;"><svg width="15.5" height="15.5" viewBox="0 0 16 16" style="display:block"><defs><clipPath id="c11"><circle cx="8" cy="8" r="8"/></clipPath></defs><g clip-path="url(#c11)"><rect width="16" height="16" fill="#e2e2e2"/><path d="M3.6 7 C3.6 2.5 12.4 2.5 12.4 7 V14 H3.6 Z" fill="#6e5a45"/><ellipse cx="8" cy="16.5" rx="6.8" ry="4.8" fill="#2e2e2e"/><rect x="6.6" y="9.5" width="2.8" height="3" fill="#e2c2b2"/><ellipse cx="8" cy="7.4" rx="2.9" ry="3.5" fill="#e2c2b2"/><path d="M4.9 7 C4.6 3.2 6.5 2.6 8 2.6 C9.5 2.6 11.4 3.2 11.1 7 C10.5 5 9.5 4.6 8 4.6 C6.5 4.6 5.5 5 4.9 7 Z" fill="#6e5a45"/></g></svg></div>
<div class="t" style="left:35.50px;top:311.62px;font-size:11.2px;color:#2e2e2e;letter-spacing:-0.2px;">Kate Curtis</div>
<div style="position:absolute;left:175px;top:316.60px;width:7.5px;height:1px;background:#a0a0a0;"></div>
<div class="t" style="right:217.00px;top:311.62px;font-size:11.2px;color:#2e2e2e;letter-spacing:-0.2px;">£50.00</div>
<div class="t" style="right:52.50px;top:311.62px;font-size:11.2px;color:#2e2e2e;letter-spacing:-0.2px;">£0.00</div>
<div style="position:absolute;left:596px;top:311.60px;width:11px;height:11px;border-radius:50%;background:#5db878;"></div>
<svg style="position:absolute;left:596px;top:311.60px" width="11" height="11" viewBox="0 0 11 11"><path d="M2.9 5.6 L4.7 7.4 L8.3 3.8" stroke="#eef8f0" stroke-width="1.1" fill="none" stroke-linecap="round" stroke-linejoin="round"/></svg>
<div class="t" style="left:610.70px;top:311.62px;font-size:11.2px;color:#2e2e2e;letter-spacing:-0.2px;">Covered</div>
<div style="position:absolute;left:13.75px;top:339.45px;width:15.5px;height:15.5px;"><svg width="15.5" height="15.5" viewBox="0 0 16 16" style="display:block"><defs><clipPath id="c12"><circle cx="8" cy="8" r="8"/></clipPath></defs><g clip-path="url(#c12)"><rect width="16" height="16" fill="#d8d8d8"/><ellipse cx="8" cy="16.5" rx="6.8" ry="4.8" fill="#3a3a3a"/><rect x="6.6" y="9.5" width="2.8" height="3" fill="#ececec"/><ellipse cx="8" cy="7.4" rx="2.9" ry="3.5" fill="#ececec"/><path d="M3.5 8 C3 2.5 6 1.5 8 1.5 C10 1.5 13 2.5 12.5 8 C11.5 5.5 10 4.8 8 4.8 C6 4.8 4.5 5.5 3.5 8 Z" fill="#1a1a1a"/><path d="M1 7 C0 2 5 0 8 0.5 C12 0 16 3 15 8 C14 11 13 12 12.5 13 L11.5 9 C12 5 10 3.5 8 3.5 C6 3.5 4 5 4.5 9 L3.5 13 C2 11 1.5 9 1 7 Z" fill="#141414"/><ellipse cx="8" cy="8.5" rx="3" ry="3.8" fill="#ececec"/><path d="M6 12 L7 16 H3 Z" fill="#222"/></g></svg></div>
<div class="t" style="left:35.50px;top:341.72px;font-size:11.2px;color:#2e2e2e;letter-spacing:-0.2px;">Paula Picasso</div>
<div style="position:absolute;left:175px;top:346.70px;width:7.5px;height:1px;background:#a0a0a0;"></div>
<div class="t" style="right:217.00px;top:341.72px;font-size:11.2px;color:#2e2e2e;letter-spacing:-0.2px;">£50.00</div>
<div class="t" style="right:52.50px;top:341.72px;font-size:11.2px;color:#2e2e2e;letter-spacing:-0.2px;">£0.00</div>
<div style="position:absolute;left:596px;top:341.70px;width:11px;height:11px;border-radius:50%;background:#5db878;"></div>
<svg style="position:absolute;left:596px;top:341.70px" width="11" height="11" viewBox="0 0 11 11"><path d="M2.9 5.6 L4.7 7.4 L8.3 3.8" stroke="#eef8f0" stroke-width="1.1" fill="none" stroke-linecap="round" stroke-linejoin="round"/></svg>
<div class="t" style="left:610.70px;top:341.72px;font-size:11.2px;color:#2e2e2e;letter-spacing:-0.2px;">Covered</div>
<div style="position:absolute;left:13.75px;top:369.55px;width:15.5px;height:15.5px;"><svg width="15.5" height="15.5" viewBox="0 0 16 16" style="display:block"><defs><clipPath id="c13"><circle cx="8" cy="8" r="8"/></clipPath></defs><g clip-path="url(#c13)"><rect width="16" height="16" fill="#8a857e"/><ellipse cx="8" cy="16.5" rx="6.8" ry="4.8" fill="#5a554e"/><rect x="6.6" y="9.5" width="2.8" height="3" fill="#d2c8bf"/><ellipse cx="8" cy="7.4" rx="2.9" ry="3.5" fill="#d2c8bf"/></g></svg></div>
<div class="t" style="left:35.50px;top:371.82px;font-size:11.2px;color:#2e2e2e;letter-spacing:-0.2px;">Sam Smith</div>
<div style="position:absolute;left:175px;top:376.80px;width:7.5px;height:1px;background:#a0a0a0;"></div>
<div class="t" style="right:217.00px;top:371.82px;font-size:11.2px;color:#2e2e2e;letter-spacing:-0.2px;">£50.00</div>
<div class="t" style="right:52.50px;top:371.82px;font-size:11.2px;color:#2e2e2e;letter-spacing:-0.2px;">£0.00</div>
<div style="position:absolute;left:596px;top:371.80px;width:11px;height:11px;border-radius:50%;background:#5db878;"></div>
<svg style="position:absolute;left:596px;top:371.80px" width="11" height="11" viewBox="0 0 11 11"><path d="M2.9 5.6 L4.7 7.4 L8.3 3.8" stroke="#eef8f0" stroke-width="1.1" fill="none" stroke-linecap="round" stroke-linejoin="round"/></svg>
<div class="t" style="left:610.70px;top:371.82px;font-size:11.2px;color:#2e2e2e;letter-spacing:-0.2px;">Covered</div>
<div style="position:absolute;left:13.75px;top:399.65px;width:15.5px;height:15.5px;"><svg width="15.5" height="15.5" viewBox="0 0 16 16" style="display:block"><defs><clipPath id="c14"><circle cx="8" cy="8" r="8"/></clipPath></defs><g clip-path="url(#c14)"><rect width="16" height="16" fill="#cfcfcf"/><ellipse cx="8" cy="16.5" rx="6.8" ry="4.8" fill="#3a3a3a"/><rect x="6.6" y="9.5" width="2.8" height="3" fill="#e6e6e6"/><ellipse cx="8" cy="7.4" rx="2.9" ry="3.5" fill="#e6e6e6"/><path d="M3 5.8 C4 1.5 12 1.5 13 5.8 Z" fill="#2e2e2e"/></g></svg></div>
<div class="t" style="left:35.50px;top:401.92px;font-size:11.2px;color:#2e2e2e;letter-spacing:-0.2px;">Sandra Ottoman</div>
<div style="position:absolute;left:175px;top:406.90px;width:7.5px;height:1px;background:#a0a0a0;"></div>
<div class="t" style="right:217.00px;top:401.92px;font-size:11.2px;color:#2e2e2e;letter-spacing:-0.2px;">£50.00</div>
<div class="t" style="right:52.50px;top:401.92px;font-size:11.2px;color:#2e2e2e;letter-spacing:-0.2px;">£0.00</div>
<div style="position:absolute;left:596px;top:401.90px;width:11px;height:11px;border-radius:50%;background:#5db878;"></div>
<svg style="position:absolute;left:596px;top:401.90px" width="11" height="11" viewBox="0 0 11 11"><path d="M2.9 5.6 L4.7 7.4 L8.3 3.8" stroke="#eef8f0" stroke-width="1.1" fill="none" stroke-linecap="round" stroke-linejoin="round"/></svg>
<div class="t" style="left:610.70px;top:401.92px;font-size:11.2px;color:#2e2e2e;letter-spacing:-0.2px;">Covered</div>
<div style="position:absolute;left:13.75px;top:429.75px;width:15.5px;height:15.5px;"><svg width="15.5" height="15.5" viewBox="0 0 16 16" style="display:block"><defs><clipPath id="c15"><circle cx="8" cy="8" r="8"/></clipPath></defs><g clip-path="url(#c15)"><rect width="16" height="16" fill="#6a6055"/><ellipse cx="8" cy="16.5" rx="6.8" ry="4.8" fill="#2e2a28"/><rect x="6.6" y="9.5" width="2.8" height="3" fill="#c39582"/><ellipse cx="8" cy="7.4" rx="2.9" ry="3.5" fill="#c39582"/><path d="M4.9 7 C4.6 3.2 6.5 2.6 8 2.6 C9.5 2.6 11.4 3.2 11.1 7 C10.5 5 9.5 4.6 8 4.6 C6.5 4.6 5.5 5 4.9 7 Z" fill="#3a302a"/></g></svg></div>
<div class="t" style="left:35.50px;top:432.02px;font-size:11.2px;color:#2e2e2e;letter-spacing:-0.2px;">Saul Goodman</div>
<div style="position:absolute;left:175px;top:437.00px;width:7.5px;height:1px;background:#a0a0a0;"></div>
<div class="t" style="right:217.00px;top:432.02px;font-size:11.2px;color:#2e2e2e;letter-spacing:-0.2px;">£50.00</div>
<div class="t" style="right:52.50px;top:432.02px;font-size:11.2px;color:#2e2e2e;letter-spacing:-0.2px;">£0.00</div>
<div style="position:absolute;left:596px;top:432.00px;width:11px;height:11px;border-radius:50%;background:#5db878;"></div>
<svg style="position:absolute;left:596px;top:432.00px" width="11" height="11" viewBox="0 0 11 11"><path d="M2.9 5.6 L4.7 7.4 L8.3 3.8" stroke="#eef8f0" stroke-width="1.1" fill="none" stroke-linecap="round" stroke-linejoin="round"/></svg>
<div class="t" style="left:610.70px;top:432.02px;font-size:11.2px;color:#2e2e2e;letter-spacing:-0.2px;">Covered</div>
<div style="position:absolute;left:13.75px;top:459.85px;width:15.5px;height:15.5px;"><svg width="15.5" height="15.5" viewBox="0 0 16 16" style="display:block"><defs><clipPath id="c16"><circle cx="8" cy="8" r="8"/></clipPath></defs><g clip-path="url(#c16)"><rect width="16" height="16" fill="#a39c93"/><ellipse cx="8" cy="16.5" rx="6.8" ry="4.8" fill="#b22443"/><rect x="6.6" y="9.5" width="2.8" height="3" fill="#d9b9a8"/><ellipse cx="8" cy="7.4" rx="2.9" ry="3.5" fill="#d9b9a8"/><path d="M4.9 7 C4.6 3.2 6.5 2.6 8 2.6 C9.5 2.6 11.4 3.2 11.1 7 C10.5 5 9.5 4.6 8 4.6 C6.5 4.6 5.5 5 4.9 7 Z" fill="#4a3a30"/></g></svg></div>
<div class="t" style="left:35.50px;top:462.12px;font-size:11.2px;color:#2e2e2e;letter-spacing:-0.2px;">Shafia Sheffield</div>
<div style="position:absolute;left:175px;top:467.10px;width:7.5px;height:1px;background:#a0a0a0;"></div>
<div class="t" style="right:217.00px;top:462.12px;font-size:11.2px;color:#2e2e2e;letter-spacing:-0.2px;">£50.00</div>
<div class="t" style="right:52.50px;top:462.12px;font-size:11.2px;color:#2e2e2e;letter-spacing:-0.2px;">£0.00</div>
<div style="position:absolute;left:596px;top:462.10px;width:11px;height:11px;border-radius:50%;background:#5db878;"></div>
<svg style="position:absolute;left:596px;top:462.10px" width="11" height="11" viewBox="0 0 11 11"><path d="M2.9 5.6 L4.7 7.4 L8.3 3.8" stroke="#eef8f0" stroke-width="1.1" fill="none" stroke-linecap="round" stroke-linejoin="round"/></svg>
<div class="t" style="left:610.70px;top:462.12px;font-size:11.2px;color:#2e2e2e;letter-spacing:-0.2px;">Covered</div>
<div style="position:absolute;left:13.75px;top:489.95px;width:15.5px;height:15.5px;"><svg width="15.5" height="15.5" viewBox="0 0 16 16" style="display:block"><defs><clipPath id="c17"><circle cx="8" cy="8" r="8"/></clipPath></defs><g clip-path="url(#c17)"><rect width="16" height="16" fill="#6a8ac2"/><path d="M3.6 7 C3.6 2.5 12.4 2.5 12.4 7 V14 H3.6 Z" fill="#2a2020"/><ellipse cx="8" cy="16.5" rx="6.8" ry="4.8" fill="#4a70b0"/><rect x="6.6" y="9.5" width="2.8" height="3" fill="#a27262"/><ellipse cx="8" cy="7.4" rx="2.9" ry="3.5" fill="#a27262"/><path d="M4.9 7 C4.6 3.2 6.5 2.6 8 2.6 C9.5 2.6 11.4 3.2 11.1 7 C10.5 5 9.5 4.6 8 4.6 C6.5 4.6 5.5 5 4.9 7 Z" fill="#2a2020"/></g></svg></div>
<div class="t" style="left:35.50px;top:492.22px;font-size:11.2px;color:#2e2e2e;letter-spacing:-0.2px;">Shelby Ferguson</div>
<div style="position:absolute;left:175px;top:497.20px;width:7.5px;height:1px;background:#a0a0a0;"></div>
<div class="t" style="right:217.00px;top:492.22px;font-size:11.2px;color:#2e2e2e;letter-spacing:-0.2px;">£30.00</div>
<div class="t" style="right:52.50px;top:492.22px;font-size:11.2px;color:#2e2e2e;letter-spacing:-0.2px;">£0.00</div>
<div style="position:absolute;left:596px;top:492.20px;width:11px;height:11px;border-radius:50%;background:#5db878;"></div>
<svg style="position:absolute;left:596px;top:492.20px" width="11" height="11" viewBox="0 0 11 11"><path d="M2.9 5.6 L4.7 7.4 L8.3 3.8" stroke="#eef8f0" stroke-width="1.1" fill="none" stroke-linecap="round" stroke-linejoin="round"/></svg>
<div class="t" style="left:610.70px;top:492.22px;font-size:11.2px;color:#2e2e2e;letter-spacing:-0.2px;">Covered</div>
</div>
<div style="position:absolute;left:212px;top:607px;width:629px;height:1px;background:#d3d3d3;"></div>
<div style="position:absolute;left:209px;top:260px;width:586px;height:33px;border:2px solid #d8242a;border-radius:7px;box-sizing:border-box;"></div>
<div class="t " style="left:213.00px;top:620.52px;font-size:11.2px;color:#333;font-weight:normal;letter-spacing:-0.2px;">1 - 20 of 116</div>
<div class="t " style="left:288.30px;top:620.52px;font-size:11.2px;color:#333;font-weight:normal;letter-spacing:-0.2px;">Items per page</div>
<div style="position:absolute;left:364px;top:617px;width:45px;height:21px;background:#dddbd8;border-radius:6px;"></div>
<div class="t " style="left:370.00px;top:620.52px;font-size:11.2px;color:#333;font-weight:normal;">20</div>
<svg style="position:absolute;left:394px;top:623px" width="10" height="8" viewBox="0 0 10 8"><path d="M2 2.5 L5 5.5 L8 2.5" stroke="#444" stroke-width="1.1" fill="none" stroke-linecap="round"/></svg>
<div style="position:absolute;left:425.6px;top:616.5px;width:131.2px;height:21.5px;background:#dddbd8;border-radius:11px;"></div>
<div style="position:absolute;left:476px;top:618px;width:36px;height:18.5px;background:#e7e6e4;border-radius:9px;"></div>
<svg style="position:absolute;left:430px;top:621px" width="14" height="12" viewBox="0 0 14 12"><path d="M12.5 6 H2 M6 2 L2 6 L6 10" stroke="#a8a8a8" stroke-width="0.95" fill="none" stroke-linecap="round" stroke-linejoin="round"/></svg>
<div class="t " style="left:448.60px;top:620.52px;font-size:11.2px;color:#333;font-weight:normal;letter-spacing:-0.2px;">Page</div>
<div class="t " style="left:491.70px;top:620.52px;font-size:11.2px;color:#333;font-weight:normal;">1</div>
<div class="t " style="left:515.60px;top:620.52px;font-size:11.2px;color:#333;font-weight:normal;letter-spacing:-0.2px;">of 6</div>
<svg style="position:absolute;left:539px;top:621px" width="14" height="12" viewBox="0 0 14 12"><path d="M1.5 6 H11.5 M7.5 2 L11.5 6 L7.5 10" stroke="#444" stroke-width="0.95" fill="none" stroke-linecap="round" stroke-linejoin="round"/></svg>
<div style="position:absolute;left:854px;top:16.3px;width:31px;height:31px"><svg width="31" height="31" viewBox="0 0 16 16" style="display:block"><defs><clipPath id="cbig"><circle cx="8" cy="8" r="8"/></clipPath></defs><g clip-path="url(#cbig)"><rect width="16" height="16" fill="#4f7f35"/><circle cx="3" cy="4" r="3" fill="#6f9a3a"/><circle cx="13" cy="5" r="3" fill="#7aa640"/><circle cx="11.5" cy="1.8" r="1.5" fill="#c0503a"/><circle cx="4.5" cy="2" r="1.2" fill="#d8a83a"/><circle cx="14" cy="9" r="1.4" fill="#e0e0e0"/><path d="M0 9 L4.5 9.5 L5 16 H0 Z" fill="#1f1f1f"/><path d="M16 10 L11.5 10.5 L11 16 H16 Z" fill="#2a2a2a"/><ellipse cx="8" cy="15.5" rx="5" ry="4" fill="#ddd3cb"/><ellipse cx="8" cy="8.2" rx="3.3" ry="4" fill="#e6cfc2"/><ellipse cx="8" cy="9.6" rx="1.2" ry="1.3" fill="#7a3434"/></g></svg></div>
<div class="t " style="left:899.90px;top:13.00px;font-size:18.9px;color:#262626;font-weight:normal;-webkit-text-stroke:0.4px #262626;letter-spacing:-0.1px;">Damien Hirst</div>
<div class="t " style="left:900.80px;top:40.22px;font-size:11.2px;color:#444;font-weight:normal;letter-spacing:-0.05px;">Infrastructure Lead</div>
<div class="t " style="left:854.50px;top:82.00px;font-size:11.1px;color:#2a2a2a;font-weight:normal;letter-spacing:-0.15px;">Monthly pay</div>
<div class="t " style="right:11.00px;top:82.00px;font-size:11.1px;color:#262626;font-weight:normal;letter-spacing:-0.1px;-webkit-text-stroke:0.3px #262626;">£5,000.00</div>
<div class="t " style="left:854.50px;top:109.40px;font-size:11.1px;color:#2a2a2a;font-weight:normal;letter-spacing:-0.15px;">Health Insurance (Benefit in Kind)</div>
<div class="t " style="right:11.00px;top:109.40px;font-size:11.1px;color:#262626;font-weight:normal;letter-spacing:-0.1px;-webkit-text-stroke:0.3px #262626;">£85.00</div>
<div class="t " style="left:854.50px;top:137.20px;font-size:11.1px;color:#2a2a2a;font-weight:normal;letter-spacing:-0.15px;">Cycle Scheme (Loan repayment)</div>
<div class="t " style="right:11.00px;top:137.20px;font-size:11.1px;color:#262626;font-weight:normal;letter-spacing:-0.1px;-webkit-text-stroke:0.3px #262626;">-£100.00</div>
<div class="t " style="left:854.50px;top:165.00px;font-size:11.1px;color:#2a2a2a;font-weight:normal;letter-spacing:-0.15px;">Pension contribution</div>
<div class="t " style="right:11.00px;top:165.00px;font-size:11.1px;color:#262626;font-weight:normal;letter-spacing:-0.1px;-webkit-text-stroke:0.3px #262626;">-£183.45</div>
<div class="t " style="left:854.50px;top:192.40px;font-size:11.1px;color:#2a2a2a;font-weight:normal;letter-spacing:-0.15px;-webkit-text-stroke:0.3px #262626;">Gross</div>
<div class="t " style="right:11.00px;top:192.40px;font-size:11.1px;color:#262626;font-weight:normal;letter-spacing:-0.1px;-webkit-text-stroke:0.3px #262626;">£4,801.55</div>
<div class="t " style="left:854.50px;top:233.20px;font-size:11.1px;color:#2a2a2a;font-weight:normal;letter-spacing:-0.15px;">National insurance</div>
<div class="t " style="right:11.00px;top:233.20px;font-size:11.1px;color:#262626;font-weight:normal;letter-spacing:-0.1px;-webkit-text-stroke:0.3px #262626;">-£267.20</div>
<div class="t " style="left:854.50px;top:261.20px;font-size:11.1px;color:#2a2a2a;font-weight:normal;letter-spacing:-0.15px;">PAYE tax</div>
<div class="t " style="right:11.00px;top:261.20px;font-size:11.1px;color:#262626;font-weight:normal;letter-spacing:-0.1px;-webkit-text-stroke:0.3px #262626;">-£873.26</div>
<div class="t " style="left:854.50px;top:289.40px;font-size:11.1px;color:#2a2a2a;font-weight:normal;letter-spacing:-0.15px;-webkit-text-stroke:0.3px #262626;">Net pay</div>
<div class="t " style="right:11.00px;top:289.40px;font-size:11.1px;color:#262626;font-weight:normal;letter-spacing:-0.1px;-webkit-text-stroke:0.3px #262626;">£3,661.09</div>
<div class="t " style="left:854.50px;top:330.70px;font-size:11.1px;color:#2a2a2a;font-weight:normal;letter-spacing:-0.15px;">Health Insurance (Benefit in Kind)</div>
<div class="t " style="right:11.00px;top:330.70px;font-size:11.1px;color:#262626;font-weight:normal;letter-spacing:-0.1px;-webkit-text-stroke:0.3px #262626;">-£85.00</div>
<div class="t " style="left:854.50px;top:371.60px;font-size:11.1px;color:#2a2a2a;font-weight:normal;letter-spacing:-0.15px;-webkit-text-stroke:0.3px #262626;">Take home pay</div>
<div class="t " style="right:11.00px;top:371.60px;font-size:11.1px;color:#262626;font-weight:normal;letter-spacing:-0.1px;-webkit-text-stroke:0.3px #262626;">£3,576.09</div>
<div class="t " style="left:854.50px;top:437.70px;font-size:11.1px;color:#2a2a2a;font-weight:normal;letter-spacing:-0.15px;">Employer NI</div>
<div class="t " style="right:11.00px;top:437.70px;font-size:11.1px;color:#262626;font-weight:normal;letter-spacing:-0.1px;-webkit-text-stroke:0.3px #262626;">£685.20</div>
<div class="t " style="left:854.50px;top:465.80px;font-size:11.1px;color:#2a2a2a;font-weight:normal;letter-spacing:-0.15px;">Employer Pension</div>
<div class="t " style="right:11.00px;top:465.80px;font-size:11.1px;color:#262626;font-weight:normal;letter-spacing:-0.1px;-webkit-text-stroke:0.3px #262626;">£110.07</div>
<div style="position:absolute;left:841px;top:98.8px;width:359.5px;height:32.8px;border:2px solid #d9222a;border-radius:7px;box-sizing:border-box;"></div>
<div style="position:absolute;left:841px;top:321.6px;width:359.5px;height:31.5px;border:2px solid #d9222a;border-radius:7px;box-sizing:border-box;"></div>
<div style="position:absolute;left:1188.5px;top:108px;width:1px;height:12.5px;background:#8a8a8a;"></div>
<div style="position:absolute;left:854px;top:409.5px;width:335px;height:1px;background:#e6e6e6;"></div>
<div style="position:absolute;left:1126.3px;top:616px;width:37px;height:37px;background:#222;border-radius:50%;box-shadow:0 2px 14px rgba(0,0,0,0.13);"></div>
<svg style="position:absolute;left:1134px;top:623px" width="22" height="23" viewBox="0 0 22 23"><path d="M4.5 2 H17 a1.5 1.5 0 0 1 1.5 1.5 V20.5 L15.5 18.5 H4.5 a1.5 1.5 0 0 1 -1.5 -1.5 V3.5 a1.5 1.5 0 0 1 1.5 -1.5 Z" fill="#fff"/><path d="M5.8 13.8 Q10.5 17.2 15.7 13.8" stroke="#222" stroke-width="1" fill="none" stroke-linecap="round"/></svg>
</body></html>
